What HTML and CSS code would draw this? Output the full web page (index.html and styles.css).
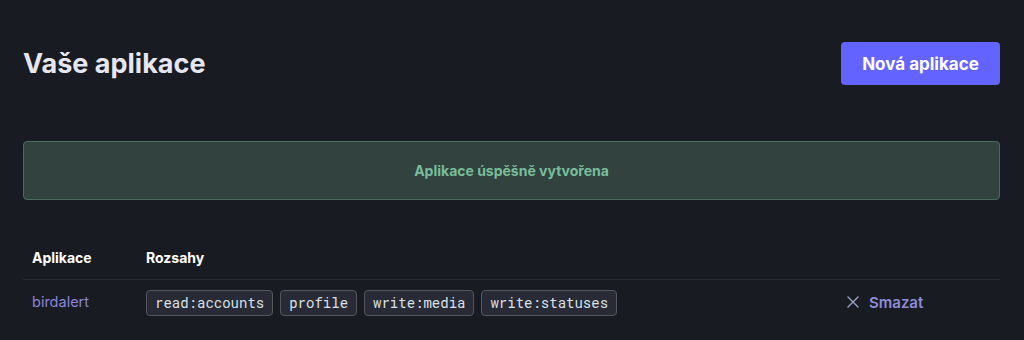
FILE: index.html
```html
<!DOCTYPE html>
<html lang="cs">
<head>
<meta charset="utf-8">
<link rel="stylesheet" href="styles.css">
</head>
<body>
<main class="page">
  <header class="page-header">
    <h1 class="title">Vaše aplikace</h1>
    <button class="btn-primary">Nová aplikace</button>
  </header>
  <div class="alert">Aplikace úspěšně vytvořena</div>
  <table class="apps">
    <thead>
      <tr>
        <th class="col-app">Aplikace</th>
        <th class="col-scopes">Rozsahy</th>
        <th class="col-actions"></th>
      </tr>
    </thead>
    <tbody>
      <tr>
        <td class="col-app"><a class="app-link">birdalert</a></td>
        <td class="col-scopes">
          <div class="tags">
            <span class="tag">read:accounts</span>
            <span class="tag">profile</span>
            <span class="tag">write:media</span>
            <span class="tag">write:statuses</span>
          </div>
        </td>
        <td class="col-actions">
          <a class="delete">
            <svg class="x-icon" viewBox="0 0 12 12" width="12" height="12" aria-hidden="true"><path d="M1 1L11 11M11 1L1 11" stroke="currentColor" stroke-width="1.4" fill="none" stroke-linecap="round"/></svg>
            Smazat
          </a>
        </td>
      </tr>
    </tbody>
  </table>
</main>
</body>
</html>
```
FILE: styles.css
```css
* { box-sizing: border-box; }
html, body { margin: 0; background: #191b22; }
body {
  font-family: Inter, "Noto Sans", sans-serif;
  color: #d9e1e8;
  height: 340px;
  overflow: hidden;
}
.page {
  padding: 42px 24px 0 23px;
}
.page-header {
  display: flex;
  align-items: center;
  justify-content: space-between;
}
.title {
  margin: 0;
  font-size: 27px;
  font-weight: 700;
  color: #e6e6f0;
  letter-spacing: 0;
}
.btn-primary {
  background: #6364ff;
  color: #fff;
  border: 0;
  border-radius: 4px;
  font-family: inherit;
  font-size: 17px;
  font-weight: 700;
  height: 43px;
  width: 159px;
  padding: 0;
}
.alert {
  margin-top: 56px;
  height: 59px;
  display: flex;
  align-items: center;
  justify-content: center;
  background: #31423f;
  border: 1px solid #4a6a5c;
  border-radius: 4px;
  color: #79bd9a;
  font-size: 14px;
  font-weight: 700;
}
.apps {
  width: 100%;
  border-collapse: collapse;
  margin-top: 38px;
  font-size: 14px;
}
.apps th {
  text-align: left;
  color: #fff;
  font-weight: 700;
  padding: 10px 0 12px 9px;
  border-bottom: 1px solid #282a33;
  height: 41px;
  vertical-align: middle;
}
.apps td {
  padding: 10px 0 8px 9px;
  vertical-align: top;
}
.col-app { width: 114px; }
.col-actions { width: 162px; }
.app-link {
  color: #8886d8;
  display: inline-block;
  padding-top: 3px;
  font-size: 14.5px;
}
.tags {
  display: flex;
  gap: 7px;
  flex-wrap: wrap;
}
.tag {
  font-family: "Roboto Mono", "DejaVu Sans Mono", monospace;
  font-size: 14px;
  color: #d9e1e8;
  background: #282a35;
  border: 1px solid #55575f;
  border-radius: 4px;
  height: 26px;
  padding: 0 8px;
  display: inline-flex;
  align-items: center;
}
.delete {
  color: #8c8dd9;
  display: inline-flex;
  align-items: center;
  gap: 10px;
  padding-top: 3px;
  font-size: 15px;
  font-weight: 600;
}
.x-icon { color: #9ba3c2; }
```
